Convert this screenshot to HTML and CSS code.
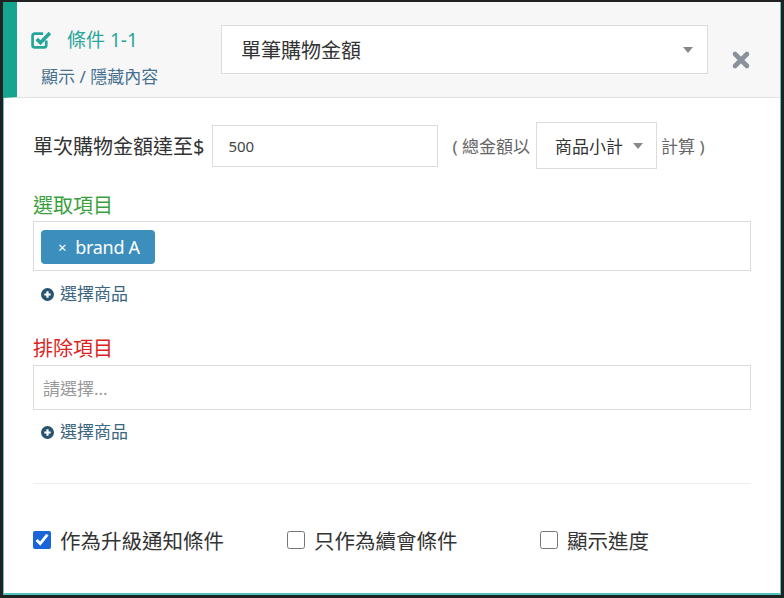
FILE: index.html
```html
<!DOCTYPE html>
<html lang="zh-Hant">
<head>
  <meta charset="UTF-8">
  <title>條件設定</title>
  <link rel="stylesheet" href="styles.css">
</head>
<body>
  <div class="card">
    <div class="card-head">
      <div class="head-left">
        <div class="cond-title">
          <svg class="check-icon" width="21" height="21" viewBox="0 0 20 20">
            <path d="M14.5 11 V15.5 a2 2 0 0 1 -2 2 H3.5 a2 2 0 0 1 -2 -2 V6.5 a2 2 0 0 1 2 -2 H11.5" fill="none" stroke="#26a69a" stroke-width="2.6"/>
            <path d="M5.5 9.5 L9 13 L18 3.8" fill="none" stroke="#26a69a" stroke-width="3.4"/>
          </svg>
          <span>條件 1-1</span>
        </div>
        <a class="toggle-link">顯示 / 隱藏內容</a>
      </div>
      <div class="select big-select">
        <span>單筆購物金額</span>
        <i class="caret"></i>
      </div>
      <svg class="close-icon" width="20" height="20" viewBox="0 0 20 20">
        <path d="M4 4 L16 16 M16 4 L4 16" stroke="#8b919a" stroke-width="4.6" stroke-linecap="round"/>
      </svg>
    </div>

    <div class="card-body">
      <div class="amount-row">
        <span class="label">單次購物金額達至$</span>
        <div class="text-input amount-input">500</div>
        <span class="note">( 總金額以</span>
        <div class="select small-select">
          <span>商品小計</span>
          <i class="caret"></i>
        </div>
        <span class="note note-end">計算 )</span>
      </div>

      <div class="section-label include">選取項目</div>
      <div class="multi-box">
        <span class="tag"><span class="tag-x">×</span>brand A</span>
      </div>
      <a class="add-link">
        <svg width="13" height="13" viewBox="0 0 13 13">
          <circle cx="6.5" cy="6.5" r="6.5" fill="#28536f"/>
          <path d="M6.5 3.3 V9.7 M3.3 6.5 H9.7" stroke="#fff" stroke-width="2.2"/>
        </svg>
        選擇商品
      </a>

      <div class="section-label exclude">排除項目</div>
      <div class="text-input placeholder-box">請選擇...</div>
      <a class="add-link">
        <svg width="13" height="13" viewBox="0 0 13 13">
          <circle cx="6.5" cy="6.5" r="6.5" fill="#28536f"/>
          <path d="M6.5 3.3 V9.7 M3.3 6.5 H9.7" stroke="#fff" stroke-width="2.2"/>
        </svg>
        選擇商品
      </a>

      <hr class="divider">

      <div class="options">
        <label class="option"><input type="checkbox" checked> 作為升級通知條件</label>
        <label class="option"><input type="checkbox"> 只作為續會條件</label>
        <label class="option"><input type="checkbox"> 顯示進度</label>
      </div>
    </div>
  </div>
</body>
</html>
```

FILE: styles.css
```css
* {
  box-sizing: border-box;
}
body {
  margin: 0;
  background: #1f2122;
  padding: 2px 3px 3px 3px;
  font-family: "Noto Sans", "Noto Sans CJK TC", sans-serif;
  color: #333;
}
.card {
  height: 593px;
  background: #fff;
  border: 1px solid #62c6c1;
  border-bottom: 2px solid #4fc3be;
}
.card-head {
  display: flex;
  align-items: flex-start;
  height: 96px;
  margin: -1px 0 0 -1px;
  background: #f7f7f7;
  border-left: 14px solid #15a58f;
  border-bottom: 1px solid #e2e2e2;
}
.head-left {
  width: 204px;
  padding: 25px 0 0 14px;
}
.cond-title {
  display: flex;
  align-items: center;
  height: 24px;
  color: #2aa69b;
  font-size: 19px;
}
.check-icon {
  margin-right: 15px;
}
.toggle-link {
  display: block;
  margin: 15px 0 0 10px;
  line-height: 22px;
  font-size: 17px;
  color: #46708f;
}
.select {
  display: flex;
  align-items: center;
  background: #fff;
  border: 1px solid #dcdcdc;
  white-space: nowrap;
  flex-shrink: 0;
}
.caret {
  width: 0;
  height: 0;
  border-left: 5px solid transparent;
  border-right: 5px solid transparent;
  border-top: 6px solid #888;
}
.big-select {
  width: 487px;
  height: 49px;
  margin-top: 23px;
  padding: 0 14px 0 19px;
  justify-content: space-between;
  font-size: 20px;
  color: #333;
}
.close-icon {
  margin: 48px 0 0 23px;
}
.card-body {
  padding: 0 29px;
}
.amount-row {
  display: flex;
  align-items: center;
  height: 47px;
  margin-top: 24px;
  white-space: nowrap;
}
.label {
  font-size: 20px;
  color: #333;
}
.text-input {
  display: flex;
  align-items: center;
  background: #fff;
  border: 1px solid #dcdcdc;
}
.amount-input {
  width: 226px;
  height: 42px;
  margin-left: 8px;
  padding-left: 15px;
  font-size: 15px;
  color: #444;
}
.note {
  margin-left: 14px;
  font-size: 17px;
  color: #666;
}
.note-end {
  margin-left: 4px;
}
.small-select {
  width: 121px;
  height: 47px;
  margin-left: 6px;
  padding: 0 12px 0 18px;
  gap: 10px;
  font-size: 17px;
  color: #333;
}
.section-label {
  margin-top: 24px;
  line-height: 26px;
  font-size: 20px;
}
.include {
  color: #3a9f3d;
}
.exclude {
  margin-top: 31px;
  color: #dd2222;
}
.multi-box {
  height: 50px;
  margin-top: 2px;
  padding: 8px 7px;
  border: 1px solid #dcdcdc;
}
.tag {
  display: inline-flex;
  align-items: center;
  height: 34px;
  padding: 0 15px 0 17px;
  background: #3c8ebd;
  border-radius: 4px;
  color: #fff;
  font-size: 18px;
  letter-spacing: -0.3px;
}
.tag-x {
  margin-right: 9px;
  font-size: 15px;
}
.add-link {
  display: flex;
  align-items: center;
  gap: 6px;
  margin: 12px 0 0 8px;
  line-height: 22px;
  font-size: 17px;
  color: #3c6580;
}
.placeholder-box {
  height: 45px;
  margin-top: 3px;
  padding-left: 9px;
  font-size: 17px;
  color: #999;
}
.placeholder-box + .add-link {
  margin-top: 11px;
}
.divider {
  margin: 40px 0 0 0;
  border: none;
  border-top: 1px solid #eeeeee;
}
.options {
  display: grid;
  grid-template-columns: 254px 253px auto;
  margin-top: 42px;
}
.option {
  display: flex;
  align-items: center;
  gap: 9px;
  height: 28px;
  font-size: 20.5px;
  color: #333;
}
.option input {
  width: 18px;
  height: 18px;
  margin: 0;
  accent-color: #1a66d8;
}
```
